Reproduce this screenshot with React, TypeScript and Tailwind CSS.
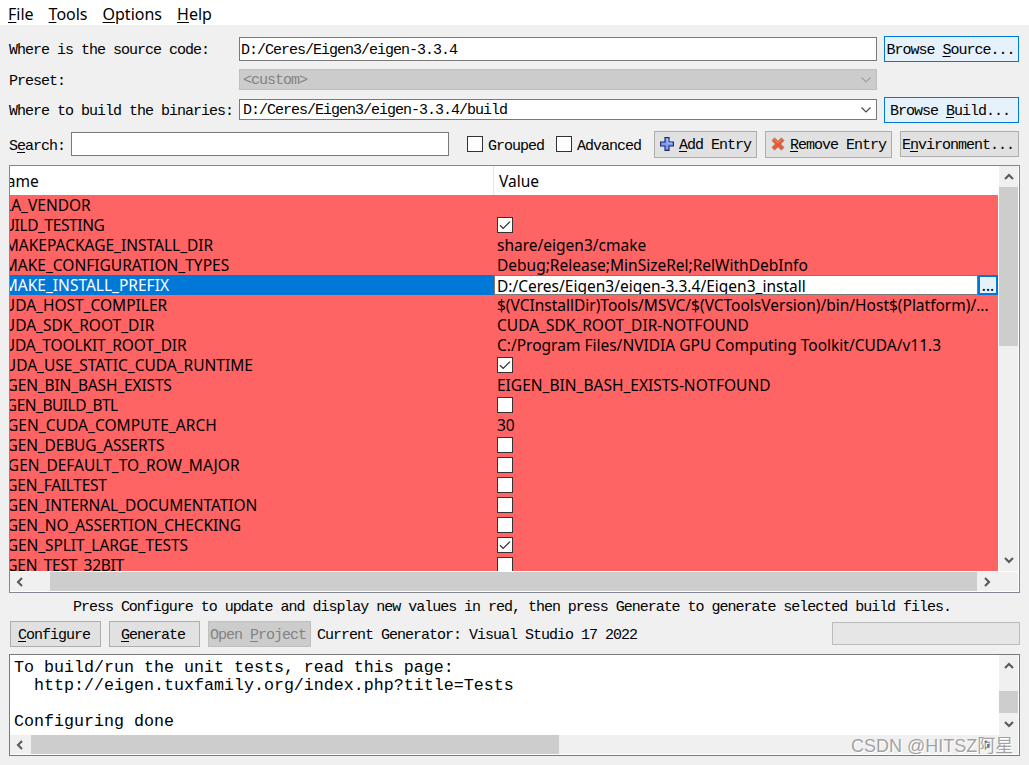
import { ReactNode } from 'react'

interface CacheEntry { name: string; nameClass: string; value?: string; checked?: boolean; selected?: boolean }

const ENTRIES: CacheEntry[] = [
  { name: 'BLA_VENDOR', nameClass: '-ml-[17px]' },
  { name: 'BUILD_TESTING', nameClass: '-ml-[16px] tracking-[-0.4px]', checked: true },
  { name: 'CMAKEPACKAGE_INSTALL_DIR', nameClass: '-ml-[15px]', value: 'share/eigen3/cmake' },
  { name: 'CMAKE_CONFIGURATION_TYPES', nameClass: '-ml-[16px]', value: 'Debug;Release;MinSizeRel;RelWithDebInfo' },
  { name: 'CMAKE_INSTALL_PREFIX', nameClass: '-ml-[16px]', value: 'D:/Ceres/Eigen3/eigen-3.3.4/Eigen3_install', selected: true },
  { name: 'CUDA_HOST_COMPILER', nameClass: '-ml-[16px]', value: '$(VCInstallDir)Tools/MSVC/$(VCToolsVersion)/bin/Host$(Platform)/...' },
  { name: 'CUDA_SDK_ROOT_DIR', nameClass: '-ml-[16px]', value: 'CUDA_SDK_ROOT_DIR-NOTFOUND' },
  { name: 'CUDA_TOOLKIT_ROOT_DIR', nameClass: '-ml-[16px] tracking-[-0.12px]', value: 'C:/Program Files/NVIDIA GPU Computing Toolkit/CUDA/v11.3' },
  { name: 'CUDA_USE_STATIC_CUDA_RUNTIME', nameClass: '-ml-[15px]', checked: true },
  { name: 'EIGEN_BIN_BASH_EXISTS', nameClass: '-ml-[17px] tracking-[-0.15px]', value: 'EIGEN_BIN_BASH_EXISTS-NOTFOUND' },
  { name: 'EIGEN_BUILD_BTL', nameClass: '-ml-[17px] tracking-[-0.5px]', checked: false },
  { name: 'EIGEN_CUDA_COMPUTE_ARCH', nameClass: '-ml-[17px] tracking-[0.05px]', value: '30' },
  { name: 'EIGEN_DEBUG_ASSERTS', nameClass: '-ml-[17px] tracking-[-0.15px]', checked: false },
  { name: 'EIGEN_DEFAULT_TO_ROW_MAJOR', nameClass: '-ml-[16px]', checked: false },
  { name: 'EIGEN_FAILTEST', nameClass: '-ml-[17px] tracking-[-0.28px]', checked: false },
  { name: 'EIGEN_INTERNAL_DOCUMENTATION', nameClass: '-ml-[17px] tracking-[-0.07px]', checked: false },
  { name: 'EIGEN_NO_ASSERTION_CHECKING', nameClass: '-ml-[17px] tracking-[-0.1px]', checked: false },
  { name: 'EIGEN_SPLIT_LARGE_TESTS', nameClass: '-ml-[17px] tracking-[-0.07px]', checked: true },
  { name: 'EIGEN_TEST_32BIT', nameClass: '-ml-[17px] tracking-[-0.28px]', checked: false },
]

const ARROWS = {
  up: 'M1 7 L5 3 L9 7',
  down: 'M1 3 L5 7 L9 3',
  left: 'M7 1 L3 5 L7 9',
  right: 'M3 1 L7 5 L3 9',
}

function Arrow({ dir }: { dir: keyof typeof ARROWS }) {
  return (
    <svg width="10" height="10" viewBox="0 0 10 10" className="shrink-0">
      <path d={ARROWS[dir]} fill="none" stroke="#5a5a5a" strokeWidth="2.1" />
    </svg>
  )
}

function ComboArrow({ color }: { color: string }) {
  return (
    <svg width="10" height="6" viewBox="0 0 10 6" className="shrink-0">
      <path d="M0.5 0.5 L5 5 L9.5 0.5" fill="none" stroke={color} strokeWidth="1.1" />
    </svg>
  )
}

function CheckBox({ checked }: { checked?: boolean }) {
  return (
    <span className="flex h-4 w-4 shrink-0 items-center justify-center border border-[#333] bg-white">
      {checked && (
        <svg width="14" height="14" viewBox="0 0 14 14">
          <path d="M2 7.2 L5.2 10.4 L12 3.6" fill="none" stroke="#333" strokeWidth="1.3" />
        </svg>
      )}
    </span>
  )
}

function Button({ className, children }: { className: string; children: ReactNode }) {
  return (
    <button className={`flex shrink-0 items-center justify-center whitespace-pre border ${className}`}>
      {children}
    </button>
  )
}

const U = ({ children }: { children: ReactNode }) => <span className="underline decoration-1 underline-offset-2">{children}</span>

export default function App() {
  return (
    <div className="flex h-[765px] w-[1029px] flex-col overflow-hidden bg-[#f0f0f0] font-['Liberation_Mono',monospace] text-[15px] leading-5 tracking-[-1px] text-black">
      <nav className="flex h-[25px] shrink-0 items-center gap-[15px] bg-white pl-2 pt-[2px] font-['Noto_Sans',sans-serif] text-[16px] tracking-normal">
        <span><U>F</U>ile</span>
        <span><U>T</U>ools</span>
        <span><U>O</U>ptions</span>
        <span><U>H</U>elp</span>
      </nav>

      <div className="flex h-[38px] shrink-0 items-end pl-[9px]">
        <div className="w-[230px] pb-[2px]">Where is the source code:</div>
        <div className="mb-[2px] flex h-[24px] w-[638px] items-center border border-[#7a7a7a] bg-white pl-[1px] pt-[3px]">D:/Ceres/Eigen3/eigen-3.3.4</div>
        <Button className="mb-px ml-[7px] h-[26px] w-[135px] border-[#0078d7] bg-[#e5f1fb] pr-[2px] pt-[3px]">Browse <U>S</U>ource...</Button>
      </div>

      <div className="flex h-[28px] shrink-0 items-end pl-[9px]">
        <div className="w-[230px] -mb-px">Preset:</div>
        <div className="mb-px flex h-[21px] w-[638px] items-center justify-between border border-[#bfbfbf] bg-[#ccc] pl-[3px] pr-[5px] text-[#838383]">
          <span className="pt-[3px]">&lt;custom&gt;</span>
          <ComboArrow color="#a0a0a0" />
        </div>
      </div>

      <div className="flex h-[33px] shrink-0 items-end pl-[9px]">
        <div className="w-[230px] pb-[2px]">Where to build the binaries:</div>
        <div className="mb-[4px] flex h-[21px] w-[638px] items-center justify-between border border-[#7a7a7a] bg-white pl-[3px] pr-[5px]">
          <span className="pt-[3px]">D:/Ceres/Eigen3/eigen-3.3.4/build</span>
          <ComboArrow color="#444" />
        </div>
        <Button className="mb-px ml-[7px] h-[26px] w-[135px] border-[#0078d7] bg-[#e5f1fb] pr-[3px] pt-[3px]">Browse <U>B</U>uild...</Button>
      </div>

      <div className="flex h-[41px] shrink-0 items-start pl-[9px] pt-[7px]">
        <div className="w-[62px] pt-[6px]">S<U>e</U>arch:</div>
        <div className="mt-[1px] h-[24px] w-[378px] border border-[#7a7a7a] bg-white" />
        <label className="ml-[18px] flex w-[89px] items-start gap-[5px] pt-[5px]"><CheckBox /><span className="pt-px">Grouped</span></label>
        <label className="flex w-[98px] items-start gap-[5px] pt-[5px]"><CheckBox /><span className="pt-px">Advanced</span></label>
        <Button className="h-[27px] w-[103px] gap-[5px] border-[#adadad] bg-[#e1e1e1]">
          <svg width="14" height="14" viewBox="0 0 14 14" className="mb-[2px]">
            <path d="M5 0.6h4V5h4.4v4H9v4.4H5V9H0.6V5H5z" fill="#7d9df0" stroke="#17256b" strokeWidth="1.1" />
            <path d="M6.2 1.8h1.6v4.4h4.4" fill="none" stroke="#b4c8fb" strokeWidth="1" />
          </svg>
          <span className="pt-[3px]"><U>A</U>dd Entry</span>
        </Button>
        <Button className="ml-2 h-[27px] w-[127px] gap-[5px] border-[#adadad] bg-[#e1e1e1]">
          <svg width="14" height="14" viewBox="0 0 14 14" className="mb-[2px]">
            <path d="M3.6 1 L7 4.3 L10.4 1 L13 3.5 L9.6 7 L13 10.5 L10.4 13 L7 9.7 L3.6 13 L1 10.5 L4.4 7 L1 3.5z" fill="#f0562c" stroke="#a9806f" strokeWidth="1" />
            <path d="M3.6 2.6 L7 6 L10.4 2.6" fill="none" stroke="#ff8b66" strokeWidth="1" />
          </svg>
          <span className="pt-[3px]"><U>R</U>emove Entry</span>
        </Button>
        <Button className="ml-2 h-[26px] w-[119px] border-[#adadad] bg-[#e1e1e1] pr-[3px] pt-[4px]">E<U>n</U>vironment...</Button>
      </div>

      {/* cache table */}
      <div className="ml-[9px] flex h-[428px] w-[1011px] shrink-0 flex-col border border-[#828790] bg-white font-['Noto_Sans',sans-serif] text-[15.5px] tracking-normal">
        <div className="flex h-[405px] shrink-0">
          <div className="w-[988px] overflow-hidden">
            <div className="flex h-[29px] items-center">
              <div className="flex h-full w-[484px] items-center overflow-hidden border-r border-[#e5e5e5] pt-px"><span className="-ml-[15px]">Name</span></div>
              <div className="flex-1 pl-[5px] pt-px">Value</div>
            </div>
            {ENTRIES.map(e => (
              <div key={e.name} className="flex h-5 bg-[#ff6464]">
                <div className={`w-[484px] shrink-0 overflow-hidden whitespace-pre ${e.selected ? 'bg-[#0078d7] text-white' : ''}`}>
                  <span className={e.nameClass}>{e.name}</span>
                </div>
                {e.selected ? (
                  <>
                    <div className="flex w-[484px] shrink-0 items-center overflow-hidden border border-[#7a7a7a] bg-white pl-[2px] pt-[2px]">{e.value}</div>
                    <div className="flex w-5 items-center justify-center border-2 border-[#0078d7] bg-[#e5f1fb]">...</div>
                  </>
                ) : (
                  <div className="flex w-[504px] shrink-0 items-center whitespace-pre pl-[3px]">
                    {e.value ?? (e.checked !== undefined && <CheckBox checked={e.checked} />)}
                  </div>
                )}
              </div>
            ))}
          </div>
          <div className="ml-px flex w-[19px] flex-col items-center bg-[#f0f0f0]">
            <div className="flex h-[21px] items-center"><Arrow dir="up" /></div>
            <div className="h-[159px] w-full bg-[#cdcdcd]" />
            <div className="mt-auto flex h-[22px] items-center pb-px"><Arrow dir="down" /></div>
          </div>
        </div>
        <div className="mt-px flex h-[19px] w-[1008px] items-center bg-[#f0f0f0]">
          <div className="w-10 pl-[5px]"><Arrow dir="left" /></div>
          <div className="h-full w-[927px] bg-[#cdcdcd]" />
          <div className="flex w-5 justify-center"><Arrow dir="right" /></div>
        </div>
      </div>

      <div className="flex h-[28px] shrink-0 items-center whitespace-pre pl-[73px] pt-[2px] tracking-[-1.02px]">
        Press Configure to update and display new values in red, then press Generate to generate selected build files.
      </div>

      <div className="flex h-[33px] shrink-0 items-start pl-[10px]">
        <Button className="h-[26px] w-[91px] border-[#adadad] bg-[#e1e1e1] pr-[3px] pt-[4px]"><U>C</U>onfigure</Button>
        <Button className="ml-2 h-[26px] w-[91px] border-[#adadad] bg-[#e1e1e1] pr-[3px] pt-[4px]"><U>G</U>enerate</Button>
        <Button className="ml-2 h-[26px] w-[103px] border-[#bfbfbf] bg-[#ccc] pr-[3px] pt-[4px] text-[#838383]">Open <U>P</U>roject</Button>
        <div className="ml-[6px] w-[515px] pt-[5px]">Current Generator: Visual Studio 17 2022</div>
        <div className="mt-[1px] h-[23px] w-[188px] border border-[#bcbcbc] bg-[#e6e6e6]" />
      </div>

      {/* configure log */}
      <div className="relative ml-[9px] flex h-[102px] w-[1011px] shrink-0 flex-col border border-[#7a7a7a] bg-white">
        <div className="flex h-[80px]">
          <pre className="w-[989px] pl-1 pt-[4px] font-['Liberation_Mono',monospace] text-[16.67px] leading-[18px] tracking-normal">
            {'To build/run the unit tests, read this page:\n  http://eigen.tuxfamily.org/index.php?title=Tests\n\nConfiguring done'}
          </pre>
          <div className="flex w-[19px] flex-col items-center bg-[#f0f0f0]">
            <div className="flex h-[36px] items-start pt-[6px]"><Arrow dir="up" /></div>
            <div className="h-[22px] w-full bg-[#cdcdcd]" />
            <div className="flex h-[21px] items-center"><Arrow dir="down" /></div>
          </div>
        </div>
        <div className="flex h-[19px] w-[1008px] items-center bg-[#f0f0f0]">
          <div className="w-[21px] pl-[5px]"><Arrow dir="left" /></div>
          <div className="h-full w-[528px] bg-[#cdcdcd]" />
          <div className="ml-[418px] flex w-5 justify-center"><Arrow dir="right" /></div>
        </div>
        <div className="absolute left-[841px] top-[81px] whitespace-nowrap font-['Liberation_Sans','Noto_Sans_CJK_SC',sans-serif] text-[18px] tracking-normal text-[#8c8c8c]/80 [text-shadow:1px_1px_0_#fff]">CSDN @HITSZ阿星</div>
      </div>
    </div>
  )
}
